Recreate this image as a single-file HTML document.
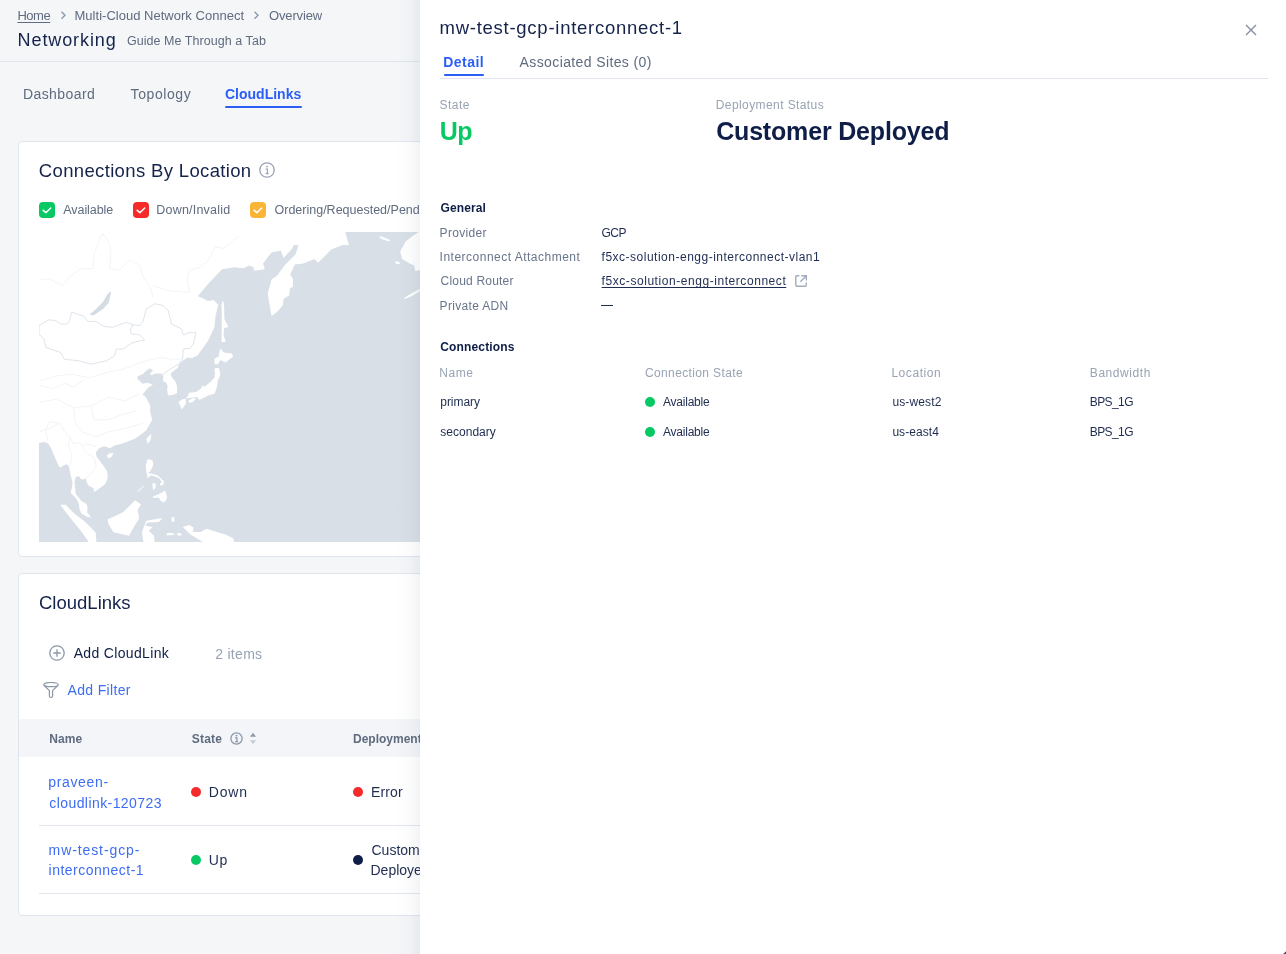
<!DOCTYPE html>
<html><head><meta charset="utf-8">
<style>
*{box-sizing:border-box;margin:0;padding:0}
html,body{width:1286px;height:954px;overflow:hidden}
body{font-family:"Liberation Sans",sans-serif;background:#f4f6f8;position:relative}
.t{position:absolute;white-space:nowrap}
.a{position:absolute}
.dot{position:absolute;width:10px;height:10px;border-radius:50%}
</style></head>
<body>
<div id="wrap" style="position:absolute;left:0;top:0;width:1286px;height:954px;will-change:transform">
<div id="left" class="a" style="left:0;top:0;width:420px;height:954px;overflow:hidden">
<div class="t" style="left:17.4px;top:9.0px;font-size:13px;line-height:13px;font-weight:400;letter-spacing:-0.467px;color:#5f6b7f;text-decoration:underline;text-underline-offset:2px;">Home</div>
<svg class="a" style="left:59px;top:10px" width="8" height="10" viewBox="0 0 8 10"><path d="M2.5 1.7 L6 5.2 L2.5 8.7" fill="none" stroke="#8a95a6" stroke-width="1.3"/></svg>
<div class="t" style="left:74.5px;top:9.0px;font-size:13px;line-height:13px;font-weight:400;letter-spacing:0.019px;color:#5f6b7f;">Multi-Cloud Network Connect</div>
<svg class="a" style="left:252px;top:10px" width="8" height="10" viewBox="0 0 8 10"><path d="M2.5 1.7 L6 5.2 L2.5 8.7" fill="none" stroke="#8a95a6" stroke-width="1.3"/></svg>
<div class="t" style="left:269.0px;top:9.0px;font-size:13px;line-height:13px;font-weight:400;letter-spacing:-0.143px;color:#5f6b7f;">Overview</div>
<div class="t" style="left:17.6px;top:31.0px;font-size:18px;line-height:18px;font-weight:400;letter-spacing:0.9px;color:#15234b;">Networking</div>
<div class="t" style="left:127.0px;top:35.0px;font-size:12.5px;line-height:12.5px;font-weight:400;letter-spacing:0.048px;color:#5f6b7f;">Guide Me Through a Tab</div>
<div class="a" style="left:0;top:61px;width:1286px;height:1px;background:#dfe3ec"></div>
<div class="t" style="left:22.9px;top:87.0px;font-size:14px;line-height:14px;font-weight:400;letter-spacing:0.425px;color:#5f6b7f;">Dashboard</div><div class="t" style="left:130.6px;top:87.0px;font-size:14px;line-height:14px;font-weight:400;letter-spacing:0.571px;color:#5f6b7f;">Topology</div><div class="t" style="left:225.0px;top:87.0px;font-size:14px;line-height:14px;font-weight:700;letter-spacing:0.0px;color:#2b5ef5;">CloudLinks</div>
<div class="a" style="left:225px;top:106px;width:77px;height:2px;background:#2b5ef5;border-radius:1px"></div>

<div class="a" style="left:18px;top:141px;width:440px;height:416px;background:#fff;border:1px solid #dfe5ef;border-radius:4px"></div>
<div class="t" style="left:38.8px;top:162.0px;font-size:18.5px;line-height:18.5px;font-weight:400;letter-spacing:0.35px;color:#15234b;">Connections By Location</div>
<svg class="a" style="left:259px;top:162px" width="16" height="16" viewBox="0 0 16 16"><circle cx="8" cy="8" r="7.2" fill="none" stroke="#97a1b1" stroke-width="1.3"/><circle cx="8" cy="4.6" r="0.9" fill="#97a1b1"/><path d="M6.6 7 H8.4 V11.6 M6.6 11.6 H9.6" fill="none" stroke="#97a1b1" stroke-width="1.2"/></svg>
<div class="a" style="left:39px;top:202px;width:16px;height:16px;border-radius:4px;background:#06c964"></div>
<div class="a" style="left:133px;top:202px;width:16px;height:16px;border-radius:4px;background:#f52a2a"></div>
<div class="a" style="left:250px;top:202px;width:16px;height:16px;border-radius:4px;background:#fbb536"></div>
<svg class="a" style="left:39px;top:202px" width="16" height="16"><path d="M4.2 8.3 L6.9 10.7 L11.7 6" fill="none" stroke="#fff" stroke-width="1.55" stroke-linecap="round" stroke-linejoin="round"/></svg>
<svg class="a" style="left:133px;top:202px" width="16" height="16"><path d="M4.2 8.3 L6.9 10.7 L11.7 6" fill="none" stroke="#fff" stroke-width="1.55" stroke-linecap="round" stroke-linejoin="round"/></svg>
<svg class="a" style="left:250px;top:202px" width="16" height="16"><path d="M4.2 8.3 L6.9 10.7 L11.7 6" fill="none" stroke="#fff" stroke-width="1.55" stroke-linecap="round" stroke-linejoin="round"/></svg>
<div class="t" style="left:63.3px;top:204.0px;font-size:12.5px;line-height:12.5px;font-weight:400;letter-spacing:-0.075px;color:#5f6b7f;">Available</div><div class="t" style="left:156.3px;top:204.0px;font-size:12.5px;line-height:12.5px;font-weight:400;letter-spacing:0.209px;color:#5f6b7f;">Down/Invalid</div><div class="t" style="left:274.5px;top:204.0px;font-size:12.5px;line-height:12.5px;font-weight:400;letter-spacing:0.0px;color:#5f6b7f;">Ordering/Requested/Pending</div>
<div class="a" style="left:39px;top:232px;width:400px;height:310px;overflow:hidden"><svg width="400" height="310" viewBox="0 0 400 310"><rect width="400" height="310" fill="#d8dfe6"/><path d="M0.0 -7.0 L306.2 -7.0 L306.2 0.0 L309.9 12.9 L303.4 12.9 L292.2 17.6 L279.1 30.7 L275.4 26.9 L264.2 31.6 L255.8 32.5 L251.1 42.8 L253.9 46.5 L253.9 54.9 L251.1 55.9 L250.2 63.3 L244.6 67.0 L243.6 73.6 L238.0 80.1 L232.5 83.9 L228.7 61.5 L232.5 47.5 L238.0 43.7 L245.5 33.5 L256.7 22.3 L259.5 12.9 L254.8 12.9 L253.0 16.7 L244.6 26.0 L241.8 18.5 L232.5 20.4 L224.0 31.6 L225.9 37.2 L214.7 38.7 L214.7 35.3 L210.0 33.5 L204.5 36.3 L195.1 35.3 L183.0 37.2 L169.0 52.1 L158.7 64.3 L163.4 66.1 L169.0 68.9 L174.6 68.0 L179.3 72.7 L176.5 83.9 L175.5 95.0 L169.7 107.4 L164.0 115.9 L158.4 123.5 L152.7 126.3 L148.5 125.4 L143.3 129.1 L139.5 132.9 L139.0 135.7 L133.8 139.5 L131.5 142.3 L132.9 145.2 L136.7 149.9 L138.1 154.6 L138.1 161.2 L133.8 163.1 L129.1 163.6 L128.2 158.4 L128.6 153.7 L127.2 150.8 L123.9 148.9 L124.4 144.2 L122.5 141.4 L116.8 141.4 L112.1 143.3 L111.2 141.4 L114.0 138.6 L111.2 136.2 L107.4 138.6 L103.6 142.3 L98.5 144.2 L98.5 147.1 L103.6 151.8 L108.4 150.8 L114.0 152.7 L109.3 155.5 L103.6 162.2 L107.4 165.9 L111.2 173.5 L111.2 180.1 L113.1 188.0 L107.3 198.2 L100.0 204.0 L96.4 206.4 L84.3 211.3 L74.7 213.7 L71.3 216.2 L65.0 214.3 L60.0 216.2 L56.8 220.6 L57.5 224.4 L61.3 229.4 L65.0 234.4 L68.2 239.4 L68.8 245.7 L66.3 252.0 L61.3 255.8 L56.2 259.6 L54.3 259.6 L55.0 257.1 L53.7 255.8 L49.3 253.3 L47.4 249.5 L46.8 245.7 L44.9 247.6 L41.8 247.0 L40.5 244.5 L37.4 244.5 L35.5 248.9 L36.1 255.8 L36.7 262.1 L39.9 265.7 L42.4 268.9 L47.4 272.0 L48.7 275.8 L48.0 280.2 L50.6 283.3 L51.8 285.5 L47.4 284.6 L42.4 281.5 L40.5 277.1 L39.9 272.0 L38.0 267.6 L35.5 264.6 L31.7 260.8 L32.9 255.8 L33.6 250.8 L32.3 245.7 L31.1 240.7 L30.4 236.3 L29.2 233.2 L27.3 232.2 L24.1 233.8 L21.0 235.7 L18.1 230.5 L14.5 222.1 L12.0 216.1 L9.0 211.3 L4.8 210.0 L-4.0 211.9 Z" fill="#ffffff"/><path d="M183.9 68.0 L185.0 72.7 L185.5 87.6 L189.5 95.0 L185.3 96.0 L184.5 102.5 L186.7 110.0 L182.5 110.0 L182.8 83.9 L182.5 72.7 Z" fill="#ffffff"/><path d="M181.4 116.4 L184.7 120.6 L193.1 121.4 L194.0 124.8 L186.4 130.6 L181.4 128.1 L178.9 132.3 L175.5 132.3 L175.5 126.4 L179.7 124.8 L180.5 118.9 Z" fill="#ffffff"/><path d="M175.5 136.5 L179.7 135.7 L181.4 141.5 L180.5 144.9 L178.9 148.3 L178.0 155.0 L175.5 161.7 L169.6 163.3 L162.9 166.7 L160.4 168.0 L157.9 165.0 L150.3 165.9 L146.2 166.7 L142.8 167.5 L139.4 170.1 L141.1 173.4 L142.8 177.6 L144.5 175.1 L147.0 171.7 L146.8 167.5 L150.3 160.8 L157.1 160.0 L162.1 156.6 L163.8 153.3 L165.4 155.0 L171.3 149.9 L175.5 145.7 L175.9 141.5 Z" fill="#ffffff"/><path d="M149.5 168.4 L154.5 165.9 L157.1 166.7 L153.7 170.1 L150.3 170.9 Z" fill="#ffffff"/><path d="M112.4 201.8 L111.7 208.1 L108.6 211.9 L107.3 206.8 Z" fill="#ffffff"/><path d="M67.5 223.7 L70.7 221.2 L74.5 221.2 L72.6 225.0 L69.4 226.6 Z" fill="#ffffff"/><path d="M108.6 227.0 L113.6 228.2 L114.3 233.3 L111.1 239.6 L108.6 240.8 L118.7 243.3 L125.0 249.6 L124.3 252.2 L119.9 245.9 L112.4 243.3 L108.6 245.9 L107.3 239.6 L106.7 233.3 Z" fill="#ffffff"/><path d="M113.6 251.0 L116.5 251.5 L116.8 255.0 L114.5 258.4 L113.5 255.0 Z" fill="#ffffff"/><path d="M121.0 251.0 L124.0 250.5 L124.5 253.0 L121.5 253.5 Z" fill="#ffffff"/><path d="M113.6 264.7 L121.2 261.6 L126.2 258.4 L128.1 264.7 L127.5 267.3 L124.9 270.4 L121.2 268.5 L119.9 265.4 L114.3 266.0 Z" fill="#ffffff"/><path d="M98.5 259.2 L104.8 253.7 L105.2 254.3 L98.9 260.0 Z" fill="#ffffff"/><path d="M68.7 287.2 L74.7 284.7 L84.3 279.9 L91.6 272.7 L96.0 268.2 L102.1 272.6 L98.6 277.8 L100.3 286.4 L96.9 291.6 L90.0 303.7 L74.4 300.2 L69.2 291.6 Z" fill="#ffffff"/><path d="M21.1 272.7 L26.5 272.7 L36.1 282.3 L45.8 289.6 L51.8 295.6 L56.6 300.4 L57.8 313.0 L51.8 313.0 L42.2 299.2 L31.3 286.0 Z" fill="#ffffff"/><path d="M107.3 288.7 L123.7 286.1 L119.9 289.9 L108.6 290.5 L106.1 293.7 L113.6 295.0 L109.8 298.7 L114.9 303.8 L116.1 313.0 L104.8 313.0 L102.9 300.0 Z" fill="#ffffff"/><path d="M132.5 284.9 L135.6 285.5 L135.2 289.9 L132.8 289.5 Z" fill="#ffffff"/><path d="M127.5 301.2 L133.0 300.8 L136.0 302.8 L127.8 303.6 Z" fill="#ffffff"/><path d="M138.0 301.0 L142.6 301.5 L142.0 303.8 L138.5 303.3 Z" fill="#ffffff"/><path d="M143.8 295.0 L150.1 293.1 L154.5 295.6 L153.9 300.0 L161.4 300.0 L167.7 296.8 L177.8 300.0 L186.6 302.5 L194.2 306.3 L196.0 313.0 L169.0 313.0 L151.4 302.5 Z" fill="#ffffff"/><path d="M381.0 -7.0 L379.9 -0.1 L374.3 3.6 L366.8 9.2 L361.2 19.5 L363.1 26.9 L370.6 31.6 L375.2 33.5 L376.2 39.0 L386.0 37.2 L386.0 -7.0 Z" fill="#ffffff"/><path d="M356.0 29.5 L360.0 29.5 L361.0 32.0 L357.0 32.0 Z" fill="#ffffff"/><path d="M341.0 4.0 L345.0 5.5 L351.0 8.0 L350.0 9.5 L344.0 7.5 L341.0 6.0 Z" fill="#ffffff"/><path d="M365.0 66.0 L373.0 61.0 L381.0 57.0 L381.0 59.0 L373.0 64.0 L366.0 67.0 Z" fill="#ffffff"/><path d="M71.3 59.4 L72.1 61.0 L69.5 71.0 L64.0 77.0 L54.5 83.4 L50.5 82.5 L56.0 78.0 L64.0 70.0 L68.5 62.0 Z" fill="#d3dbe3"/><path d="M0.0 102.0 L5.0 107.1 L6.7 115.4 L21.8 120.5 L25.2 127.2 L40.3 128.9 L52.0 132.2 L67.1 128.9 L75.5 123.8 L77.2 117.1 L83.9 117.1 L94.0 110.4 L105.7 107.9 L100.7 102.9 L92.3 102.0 L91.4 97.0 L94.0 92.8 L87.2 90.3 L73.8 95.3 L65.4 94.5 L57.0 89.4 L48.7 89.4 L45.3 84.4 L32.7 80.2 L31.0 86.9 L28.5 92.0 L21.8 92.0 L16.8 88.6 L10.1 87.8 L0.0 93.6 Z" fill="none" stroke="#dfe5eb" stroke-width="1"/><path d="M94.0 92.8 L100.7 93.6 L104.0 89.4 L107.4 76.9 L115.8 71.8 L124.2 73.5 L129.2 78.5 L132.6 92.0 L142.6 97.0 L144.3 102.9 L151.0 100.3 L156.9 100.3 L154.4 112.1 L151.0 116.3 L144.3 117.1 L143.5 127.2 L139.3 132.2 L130.9 137.3 L124.2 142.3 L117.4 145.7" fill="none" stroke="#dfe5eb" stroke-width="1"/><path d="M0.0 149.0 L16.8 144.0 L33.6 142.3 L50.3 145.7 L67.1 140.6 L83.9 137.3 L97.3 132.2 L107.4 128.9 L120.8 125.5 L134.2 127.2 L142.6 127.2" fill="none" stroke="#eef1f4" stroke-width="0.8"/><path d="M63.8 1.4 L70.5 11.4 L72.1 23.2 L70.5 36.6 L80.5 38.3 L90.6 28.2 L100.7 33.2 L104.0 45.0 L110.7 53.4 L114.1 65.1" fill="none" stroke="#eef1f4" stroke-width="0.8"/><path d="M0.0 48.3 L10.1 46.7 L23.5 53.4 L30.2 45.0 L41.9 36.6 L53.7 36.6 L55.4 21.5 L60.4 8.1 L63.8 1.4" fill="none" stroke="#eef1f4" stroke-width="0.8"/><path d="M114.1 53.4 L127.5 58.4 L144.3 60.1 L151.0 60.1 L147.7 48.3 L151.0 38.3 L161.1 34.9 L169.5 28.2 L176.2 14.8 L184.6 16.5 L194.6 8.1 L200.0 4.7" fill="none" stroke="#eef1f4" stroke-width="0.8"/><path d="M57.1 214.6 L48.4 212.0 L43.3 213.7 L39.8 210.3 L34.6 212.0 L31.1 205.1 L26.0 199.9 L20.8 191.3 L10.4 189.5" fill="none" stroke="#eef1f4" stroke-width="0.8"/><path d="M43.3 213.7 L46.7 220.7 L55.4 225.9 L57.1 234.5 L51.9 241.4 L46.7 246.6" fill="none" stroke="#eef1f4" stroke-width="0.8"/><path d="M31.1 205.1 L29.4 213.7 L32.9 224.1 L31.1 234.5" fill="none" stroke="#eef1f4" stroke-width="0.8"/><path d="M10.4 189.5 L6.9 198.2 L8.7 208.6" fill="none" stroke="#eef1f4" stroke-width="0.8"/><path d="M0.0 170.5 L17.3 167.0 L34.6 175.7 L51.9 174.0 L69.2 165.3 L86.5 168.8 L100.3 161.8" fill="none" stroke="#eef1f4" stroke-width="0.8"/><path d="M34.6 175.7 L36.3 191.3 L43.3 199.9 L57.1 205.1 L69.2 199.9 L86.5 196.4 L103.8 191.3" fill="none" stroke="#eef1f4" stroke-width="0.8"/><path d="M51.9 174.0 L55.4 187.8 L69.2 187.8 L83.0 182.6 L96.9 179.1" fill="none" stroke="#eef1f4" stroke-width="0.8"/><path d="M0.0 199.9 L10.4 196.4 L20.8 191.3" fill="none" stroke="#eef1f4" stroke-width="0.8"/><path d="M0.0 153.2 L13.8 156.7 L26.0 151.5 L34.6 154.9 L45.0 148.0" fill="none" stroke="#eef1f4" stroke-width="0.8"/></svg></div>

<div class="a" style="left:18px;top:573px;width:440px;height:343px;background:#fff;border:1px solid #dfe5ef;border-radius:4px"></div>
<div class="t" style="left:39.0px;top:594.0px;font-size:18.5px;line-height:18.5px;font-weight:400;letter-spacing:0.0px;color:#15234b;">CloudLinks</div>
<svg class="a" style="left:49px;top:645px" width="16" height="16" viewBox="0 0 16 16"><circle cx="8" cy="8" r="7.2" fill="none" stroke="#8d98a9" stroke-width="1.3"/><path d="M8 4.3 V11.7 M4.3 8 H11.7" stroke="#8d98a9" stroke-width="1.3"/></svg>
<div class="t" style="left:73.7px;top:646.0px;font-size:14px;line-height:14px;font-weight:400;letter-spacing:0.333px;color:#0f1e47;">Add CloudLink</div><div class="t" style="left:215.2px;top:647.0px;font-size:14px;line-height:14px;font-weight:400;letter-spacing:0.3px;color:#98a3b3;">2 items</div>
<svg class="a" style="left:43px;top:682px" width="16" height="16" viewBox="0 0 16 16"><ellipse cx="8" cy="2.6" rx="7.3" ry="2.1" fill="none" stroke="#8d98a9" stroke-width="1.2"/><path d="M0.9 3.2 L6.4 8.6 V14.3 Q6.4 15.4 8 15.4 Q9.6 15.4 9.6 14.3 V8.6 L15.1 3.2" fill="none" stroke="#8d98a9" stroke-width="1.2" stroke-linejoin="round"/></svg>
<div class="t" style="left:67.6px;top:683.0px;font-size:14px;line-height:14px;font-weight:400;letter-spacing:0.322px;color:#3d6df2;">Add Filter</div>
<div class="a" style="left:19px;top:719px;width:420px;height:38px;background:#f3f5f8"></div>
<div class="t" style="left:49.2px;top:733.0px;font-size:12px;line-height:12px;font-weight:700;letter-spacing:0.133px;color:#5f6b7f;">Name</div><div class="t" style="left:191.7px;top:733.0px;font-size:12px;line-height:12px;font-weight:700;letter-spacing:0.25px;color:#5f6b7f;">State</div><div class="t" style="left:353.0px;top:733.0px;font-size:12px;line-height:12px;font-weight:700;letter-spacing:0.0px;color:#5f6b7f;">Deployment Status</div>
<svg class="a" style="left:230px;top:732px" width="13" height="13" viewBox="0 0 13 13"><circle cx="6.5" cy="6.5" r="5.6" fill="none" stroke="#8d98a9" stroke-width="1.3"/><circle cx="6.5" cy="3.7" r="0.9" fill="#8d98a9"/><path d="M5.1 5.9 H6.9 V9.6 M5.1 9.6 H8.1" fill="none" stroke="#8d98a9" stroke-width="1.25"/></svg>
<svg class="a" style="left:249px;top:732px" width="8" height="13" viewBox="0 0 8 13"><path d="M4 0.8 L7 4.8 H1 Z" fill="#8d98a9"/><path d="M4 12.2 L7 8.2 H1 Z" fill="#c5ccd7"/></svg>
<div class="t" style="left:48.3px;top:775.3px;font-size:14px;line-height:14px;font-weight:400;letter-spacing:0.643px;color:#3d6df2;">praveen-</div><div class="t" style="left:49.3px;top:795.5px;font-size:14px;line-height:14px;font-weight:400;letter-spacing:0.42px;color:#3d6df2;">cloudlink-120723</div>
<div class="dot" style="left:191px;top:787px;background:#f52a2a"></div><div class="t" style="left:208.8px;top:785.3px;font-size:14px;line-height:14px;font-weight:400;letter-spacing:0.8px;color:#1e2c50;">Down</div>
<div class="dot" style="left:353px;top:787px;background:#f52a2a"></div><div class="t" style="left:371.0px;top:785.3px;font-size:14px;line-height:14px;font-weight:400;letter-spacing:0.15px;color:#1e2c50;">Error</div>
<div class="a" style="left:39px;top:825px;width:400px;height:1px;background:#e1e6ee"></div>
<div class="t" style="left:48.6px;top:843.2px;font-size:14px;line-height:14px;font-weight:400;letter-spacing:0.9px;color:#3d6df2;">mw-test-gcp-</div><div class="t" style="left:48.6px;top:863.1px;font-size:14px;line-height:14px;font-weight:400;letter-spacing:0.485px;color:#3d6df2;">interconnect-1</div>
<div class="dot" style="left:191px;top:855px;background:#06c964"></div><div class="t" style="left:208.8px;top:852.5px;font-size:14px;line-height:14px;font-weight:400;letter-spacing:0.6px;color:#1e2c50;">Up</div>
<div class="dot" style="left:353px;top:855px;background:#0f1e47"></div><div class="t" style="left:371.5px;top:843.2px;font-size:14px;line-height:14px;font-weight:400;letter-spacing:0.0px;color:#1e2c50;">Customer</div><div class="t" style="left:370.5px;top:863.1px;font-size:14px;line-height:14px;font-weight:400;letter-spacing:0.0px;color:#1e2c50;">Deployed</div>
<div class="a" style="left:39px;top:893px;width:400px;height:1px;background:#e1e6ee"></div>
</div>

<div class="a" style="left:396px;top:0;width:24px;height:954px;background:linear-gradient(to right,rgba(60,80,100,0) 0%,rgba(60,80,100,0.025) 60%,rgba(60,80,100,0.065) 100%)"></div>
<div id="drawer" class="a" style="left:420px;top:0;width:866px;height:954px;background:#fff">
</div>
<div class="t" style="left:439.5px;top:18.8px;font-size:18.5px;line-height:18.5px;font-weight:400;letter-spacing:0.74px;color:#15234b;">mw-test-gcp-interconnect-1</div>
<svg class="a" style="left:1245px;top:24px" width="12" height="12" viewBox="0 0 12 12"><path d="M1 1 L11 11 M11 1 L1 11" stroke="#8490a1" stroke-width="1.4"/></svg>
<div class="t" style="left:443.3px;top:54.9px;font-size:14px;line-height:14px;font-weight:700;letter-spacing:0.44px;color:#2b5ef5;">Detail</div><div class="t" style="left:519.6px;top:54.9px;font-size:14px;line-height:14px;font-weight:400;letter-spacing:0.384px;color:#5f6b7f;">Associated Sites (0)</div>
<div class="a" style="left:444px;top:74px;width:40px;height:2px;background:#2b5ef5;border-radius:1px"></div>
<div class="a" style="left:440px;top:78px;width:828px;height:1px;background:#e0e5ee"></div>
<div class="t" style="left:439.6px;top:99.2px;font-size:12px;line-height:12px;font-weight:400;letter-spacing:0.45px;color:#98a3b3;">State</div><div class="t" style="left:439.8px;top:119.2px;font-size:25px;line-height:25px;font-weight:700;letter-spacing:-0.6px;color:#06c964;">Up</div><div class="t" style="left:715.8px;top:99.2px;font-size:12px;line-height:12px;font-weight:400;letter-spacing:0.406px;color:#98a3b3;">Deployment Status</div><div class="t" style="left:716.2px;top:119.0px;font-size:25px;line-height:25px;font-weight:700;letter-spacing:-0.181px;color:#0f1e47;">Customer Deployed</div>
<div class="t" style="left:440.6px;top:201.8px;font-size:12px;line-height:12px;font-weight:700;letter-spacing:0.1px;color:#0f1e47;">General</div><div class="t" style="left:439.6px;top:227.0px;font-size:12px;line-height:12px;font-weight:400;letter-spacing:0.314px;color:#68758a;">Provider</div><div class="t" style="left:439.6px;top:251.1px;font-size:12px;line-height:12px;font-weight:400;letter-spacing:0.491px;color:#68758a;">Interconnect Attachment</div><div class="t" style="left:440.6px;top:275.2px;font-size:12px;line-height:12px;font-weight:400;letter-spacing:0.191px;color:#68758a;">Cloud Router</div><div class="t" style="left:439.6px;top:300.1px;font-size:12px;line-height:12px;font-weight:400;letter-spacing:0.32px;color:#68758a;">Private ADN</div>
<div class="t" style="left:601.6px;top:227.2px;font-size:12px;line-height:12px;font-weight:400;letter-spacing:-0.6px;color:#1e2c50;">GCP</div><div class="t" style="left:601.6px;top:251.1px;font-size:12px;line-height:12px;font-weight:400;letter-spacing:0.5px;color:#1e2c50;">f5xc-solution-engg-interconnect-vlan1</div><div class="t" style="left:601.6px;top:275.2px;font-size:12px;line-height:12px;font-weight:400;letter-spacing:0.557px;color:#1e2c50;text-decoration:underline;text-underline-offset:2px;">f5xc-solution-engg-interconnect</div>
<svg class="a" style="left:795px;top:275px" width="12" height="12" viewBox="0 0 12 12"><path d="M4.3 0.8 H1.9 Q0.8 0.8 0.8 1.9 V10.2 Q0.8 11.3 1.9 11.3 H10.2 Q11.3 11.3 11.3 10.2 V7.4" fill="none" stroke="#a2acbc" stroke-width="1.4"/><path d="M6.3 0.8 H11.3 V5.6 M11 1.1 L5.4 6.7" fill="none" stroke="#a2acbc" stroke-width="1.4"/></svg>
<div class="a" style="left:601px;top:305px;width:12px;height:1.2px;background:#1e2c50"></div>
<div class="t" style="left:440.3px;top:341.2px;font-size:12px;line-height:12px;font-weight:700;letter-spacing:0.14px;color:#0f1e47;">Connections</div><div class="t" style="left:439.3px;top:367.3px;font-size:12px;line-height:12px;font-weight:400;letter-spacing:0.533px;color:#98a3b3;">Name</div><div class="t" style="left:645.0px;top:367.3px;font-size:12px;line-height:12px;font-weight:400;letter-spacing:0.367px;color:#98a3b3;">Connection State</div><div class="t" style="left:891.4px;top:367.3px;font-size:12px;line-height:12px;font-weight:400;letter-spacing:0.557px;color:#98a3b3;">Location</div><div class="t" style="left:1089.8px;top:367.3px;font-size:12px;line-height:12px;font-weight:400;letter-spacing:0.575px;color:#98a3b3;">Bandwidth</div>
<div class="t" style="left:440.3px;top:396.3px;font-size:12px;line-height:12px;font-weight:400;letter-spacing:-0.05px;color:#1e2c50;">primary</div><div class="dot" style="left:645px;top:397px;background:#06c964"></div><div class="t" style="left:663.0px;top:396.3px;font-size:12px;line-height:12px;font-weight:400;letter-spacing:-0.225px;color:#1e2c50;">Available</div><div class="t" style="left:892.4px;top:396.3px;font-size:12px;line-height:12px;font-weight:400;letter-spacing:0.143px;color:#1e2c50;">us-west2</div><div class="t" style="left:1089.8px;top:396.3px;font-size:12px;line-height:12px;font-weight:400;letter-spacing:-0.6px;color:#1e2c50;">BPS_1G</div>
<div class="t" style="left:440.3px;top:426.4px;font-size:12px;line-height:12px;font-weight:400;letter-spacing:0.012px;color:#1e2c50;">secondary</div><div class="dot" style="left:645px;top:427px;background:#06c964"></div><div class="t" style="left:663.0px;top:426.4px;font-size:12px;line-height:12px;font-weight:400;letter-spacing:-0.225px;color:#1e2c50;">Available</div><div class="t" style="left:892.4px;top:426.4px;font-size:12px;line-height:12px;font-weight:400;letter-spacing:0.057px;color:#1e2c50;">us-east4</div><div class="t" style="left:1089.8px;top:426.4px;font-size:12px;line-height:12px;font-weight:400;letter-spacing:-0.6px;color:#1e2c50;">BPS_1G</div>
<svg class="a" style="left:1276px;top:944px" width="10" height="10" viewBox="0 0 10 10"><path d="M10 7.2 L10 10 L7.2 10 Z" fill="#3f505e"/></svg>
</div></body></html>
